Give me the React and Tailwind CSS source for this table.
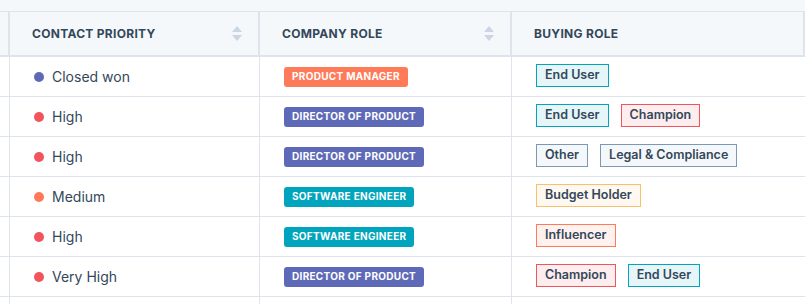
import React from 'react';

const priorityColors = {
  'Closed won': 'bg-[#5e6ab8]',
  High: 'bg-[#f2545b]',
  'Very High': 'bg-[#f2545b]',
  Medium: 'bg-[#ff7a59]',
};

const roleColors = {
  'Product Manager': 'bg-[#ff7a59]',
  'Director of Product': 'bg-[#5e6ab8]',
  'Software Engineer': 'bg-[#00a4bd]',
};

const buyingStyles = {
  'End User': 'border-[#00a4bd] bg-[#e5f5f8]',
  Champion: 'border-[#f2545b] bg-[#fdedee]',
  Other: 'border-[#7c98b6] bg-[#f5f8fa]',
  'Legal & Compliance': 'border-[#7c98b6] bg-[#f5f8fa]',
  'Budget Holder': 'border-[#f5c26b] bg-[#fef8f0]',
  Influencer: 'border-[#ff7a59] bg-[#fff1ee]',
};

const rows = [
  { priority: 'Closed won', role: 'Product Manager', buying: ['End User'] },
  { priority: 'High', role: 'Director of Product', buying: ['End User', 'Champion'] },
  { priority: 'High', role: 'Director of Product', buying: ['Other', 'Legal & Compliance'] },
  { priority: 'Medium', role: 'Software Engineer', buying: ['Budget Holder'] },
  { priority: 'High', role: 'Software Engineer', buying: ['Influencer'] },
  { priority: 'Very High', role: 'Director of Product', buying: ['Champion', 'End User'] },
];

const SortIcon = () => (
  <svg width="10" height="15" viewBox="0 0 10 15" className="text-[#cbd6e2]" fill="currentColor">
    <path d="M5 0 L10 6 L0 6 Z" />
    <path d="M0 9 L10 9 L5 15 Z" />
  </svg>
);

const HeaderCell = ({ label, sortable, className = '' }) => (
  <div
    className={`flex items-center justify-between pl-[22px] pr-4 border-r-2 border-[#dfe3eb] text-[12px] font-bold tracking-[0.3px] uppercase text-[#33475b] ${className}`}
  >
    <span>{label}</span>
    {sortable && <SortIcon />}
  </div>
);

export default function App() {
  return (
    <div className="w-[805px] h-[304px] overflow-hidden bg-white font-['Inter',sans-serif] text-[#33475b]">
      {/* top strip */}
      <div className="h-[11px] bg-[#f5f8fa]" />

      {/* header */}
      <div className="flex h-[46px] bg-[#f5f8fa] border-t border-b-2 border-[#dfe3eb]">
        <div className="w-[10px] shrink-0 border-r-2 border-[#dfe3eb]" />
        <HeaderCell label="Contact Priority" sortable className="w-[250px] shrink-0" />
        <HeaderCell label="Company Role" sortable className="w-[252px] shrink-0" />
        <HeaderCell label="Buying Role" className="flex-1 border-r-0" />
      </div>

      {rows.map((row, i) => (
        <div key={i} className="flex h-[40px] border-b border-[#dfe3eb]">
          <div className="w-[10px] shrink-0 border-r border-[#dfe3eb]" />
          <div className="w-[250px] shrink-0 flex items-center gap-2 pl-6 border-r border-[#dfe3eb] text-[14px]">
            <span className={`w-[10px] h-[10px] rounded-full ${priorityColors[row.priority]}`} />
            <span>{row.priority}</span>
          </div>
          <div className="w-[252px] shrink-0 flex items-center pl-6 border-r border-[#dfe3eb]">
            <span
              className={`h-[20px] px-2 flex items-center rounded-[3px] text-white text-[10px] font-bold tracking-[0.3px] uppercase ${roleColors[row.role]}`}
            >
              {row.role}
            </span>
          </div>
          <div className="flex-1 flex items-center gap-3 pl-6 -mt-[2px]">
            {row.buying.map((b) => (
              <span
                key={b}
                className={`h-[23px] px-2 flex items-center border text-[12.5px] font-semibold ${buyingStyles[b]}`}
              >
                {b}
              </span>
            ))}
          </div>
        </div>
      ))}

      <div className="flex h-[20px]">
        <div className="w-[10px] shrink-0 border-r border-[#dfe3eb]" />
        <div className="w-[250px] shrink-0 border-r border-[#dfe3eb]" />
        <div className="w-[252px] shrink-0 border-r border-[#dfe3eb]" />
      </div>
    </div>
  );
}
